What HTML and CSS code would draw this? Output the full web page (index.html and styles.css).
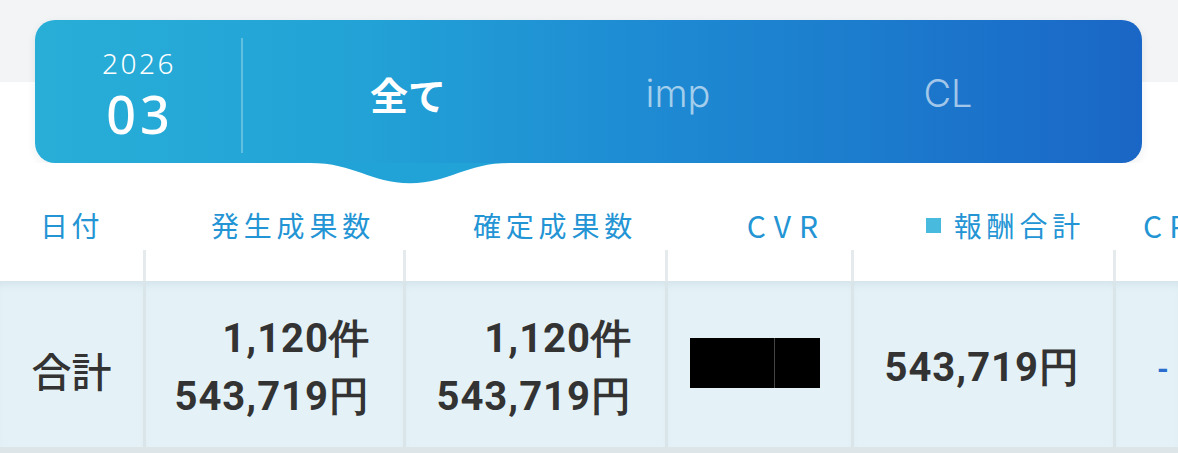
FILE: index.html
```html
<!DOCTYPE html>
<html lang="ja">
<head>
<meta charset="utf-8">
<title>成果レポート</title>
<link rel="stylesheet" href="styles.css">
</head>
<body>
<div class="page">
  <div class="card">
    <div class="date">
      <div class="year">2026</div>
      <div class="month">03</div>
    </div>
    <div class="divider"></div>
    <div class="tabs">
      <div class="tab active">全て
        <svg class="notch" width="200" height="24" viewBox="0 0 200 24" preserveAspectRatio="none"><path d="M0 0 C45 0 60 22 100 22 C140 22 155 0 200 0 Z" fill="#22a3d7"/></svg>
      </div>
      <div class="tab">imp</div>
      <div class="tab">CL</div>
    </div>
  </div>

  <div class="table">
    <div class="th th-date">日付</div>
    <div class="th">発生成果数</div>
    <div class="th">確定成果数</div>
    <div class="th th-lat">CVR</div>
    <div class="th"><span class="sq"></span>報酬合計</div>
    <div class="th th-cut">CP</div>

    <div class="gap"></div>
    <div class="gap sep"></div>
    <div class="gap sep"></div>
    <div class="gap sep"></div>
    <div class="gap sep"></div>
    <div class="gap sep"></div>

    <div class="td td-label">合計</div>
    <div class="td sep num"><span>1,120件</span><span>543,719円</span></div>
    <div class="td sep num"><span>1,120件</span><span>543,719円</span></div>
    <div class="td sep num"><span class="redact"><i></i><i></i></span></div>
    <div class="td sep num"><span>543,719円</span></div>
    <div class="td sep dash">-</div>
  </div>
</div>
</body>
</html>
```
FILE: styles.css
```css
* { box-sizing: border-box; }
html, body { margin: 0; padding: 0; }
body {
  width: 1178px;
  height: 453px;
  overflow: hidden;
  background: linear-gradient(#f2f4f5 0, #f2f4f5 82px, #ffffff 82px);
  font-family: "Noto Sans CJK JP", "Noto Sans", sans-serif;
}
.page { width: 1178px; height: 453px; padding-top: 20px; }

.card {
  margin-left: 35px;
  width: 1107px;
  height: 143px;
  border-radius: 20px;
  background: linear-gradient(90deg, #28aed7 0%, #22a2d6 30%, #1e8bd3 55%, #1c7ccd 75%, #1a66c6 100%);
  box-shadow: 0 3px 10px rgba(20, 40, 60, 0.08);
  display: flex;
  align-items: stretch;
  color: #fff;
}
.date {
  width: 206px;
  display: flex;
  flex-direction: column;
  align-items: center;
  padding-top: 28px;
  font-family: "Noto Sans", sans-serif;
}
.year { font-size: 28px; font-weight: 300; line-height: 30px; letter-spacing: 2.5px; padding-left: 2px; }
.month { margin-top: 8px; font-size: 52px; font-weight: 500; line-height: 56px; letter-spacing: 4px; padding-left: 4px; }
.divider {
  width: 2px;
  margin: 18px 0 10px;
  background: rgba(255, 255, 255, 0.28);
}
.tabs {
  display: flex;
  padding-left: 30px;
}
.tab {
  position: relative;
  width: 270px;
  display: flex;
  align-items: center;
  justify-content: center;
  font-family: "Inter", "Liberation Sans", sans-serif;
  font-weight: 300;
  font-size: 38px;
  color: rgba(255, 255, 255, 0.6);
  padding-top: 2px;
}
.tab.active {
  font-family: "Noto Sans CJK JP", sans-serif;
  font-weight: 700;
  font-size: 38px;
  color: #fff;
  padding-top: 4px;
}
.notch {
  position: absolute;
  left: 37px;
  top: 143px;
  width: 200px;
  height: 22px;
}

.table {
  display: grid;
  grid-template-columns: 143px 260px 262px 186px 262px 65px;
  grid-template-rows: 87px 31px 166px;
  border-bottom: 6px solid #dde5e9;
  background: #fff;
}
.th {
  display: flex;
  align-items: flex-end;
  justify-content: flex-end;
  padding: 0 28px 10px 0;
  font-size: 28px;
  line-height: 30px;
  letter-spacing: 4.8px;
  color: #2394d4;
  white-space: nowrap;
}
.th-lat { font-size: 30px; letter-spacing: 8px; padding-right: 25px; }
.th-date { justify-content: center; padding-right: 0; padding-left: 0; letter-spacing: 3.5px; }
.th-cut { justify-content: flex-start; padding-left: 30px; padding-right: 0; overflow: hidden; font-size: 30px; letter-spacing: 7px; }
.sq {
  display: inline-block;
  width: 15px;
  height: 15px;
  background: #47badd;
  margin-right: 13px;
  margin-bottom: 7px;
}
.gap.sep, .td.sep { border-left: 3px solid #e5eaed; }
.td {
  background: #e4f2f7;
  box-shadow: inset 0 8px 8px -5px rgba(60, 90, 110, 0.10);
  display: flex;
  flex-direction: column;
  justify-content: center;
  color: #333;
}
.td.sep { border-left-color: #dae5ea; }
.td-label {
  align-items: center;
  font-size: 40px;
  font-weight: 500;
  padding-top: 12px;
}
.num {
  align-items: flex-end;
  padding-right: 33px;
  padding-top: 8px;
  font-family: "Roboto", sans-serif;
  font-weight: 700;
  font-size: 40px;
  line-height: 58px;
  letter-spacing: 1px;
}
.num span { white-space: nowrap; }
.redact { display: flex; gap: 1px; background: #444; height: 50px; margin-right: -2px; margin-bottom: 10px; }
.redact i { display: block; height: 50px; background: #000; }
.redact i:first-child { width: 84px; }
.redact i:last-child { width: 45px; }
.dash {
  align-items: flex-start;
  padding-left: 41px;
  padding-top: 8px;
  font-family: "Roboto", sans-serif;
  font-weight: 700;
  font-size: 30px;
  color: #2a6dcf;
}
```
